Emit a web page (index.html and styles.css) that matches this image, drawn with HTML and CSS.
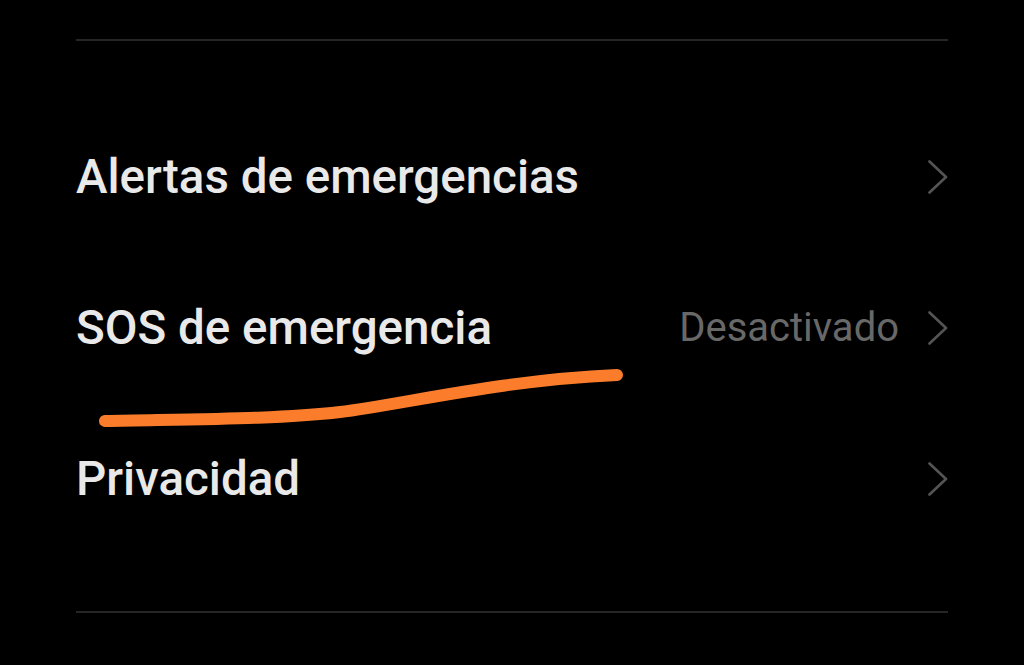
FILE: index.html
```html
<!DOCTYPE html>
<html lang="es">
<head>
<meta charset="utf-8">
<link rel="stylesheet" href="styles.css">
</head>
<body>
<div class="screen">
  <div class="divider top"></div>
  <ul class="list">
    <li class="row">
      <span class="label">Alertas de emergencias</span>
      <span class="right">
        <svg class="chev" viewBox="0 0 20 36"><path d="M1.5 2.5 L18 18 L1.5 33.5"/></svg>
      </span>
    </li>
    <li class="row">
      <span class="label">SOS de emergencia</span>
      <span class="right">
        <span class="value">Desactivado</span>
        <svg class="chev" viewBox="0 0 20 36"><path d="M1.5 2.5 L18 18 L1.5 33.5"/></svg>
      </span>
    </li>
    <li class="row">
      <span class="label">Privacidad</span>
      <span class="right">
        <svg class="chev" viewBox="0 0 20 36"><path d="M1.5 2.5 L18 18 L1.5 33.5"/></svg>
      </span>
    </li>
  </ul>
  <div class="divider bottom"></div>
  <svg class="scribble" viewBox="0 0 1024 665" width="1024" height="665">
    <path d="M105 421 C 200 419, 280 419, 340 412 S 500 380, 617 375"/>
  </svg>
</div>
</body>
</html>
```
FILE: styles.css
```css
html, body {
  margin: 0;
  padding: 0;
  background: #000;
}
.screen {
  position: relative;
  width: 1024px;
  height: 665px;
  overflow: hidden;
  background: #000;
  font-family: Roboto, "Liberation Sans", sans-serif;
}
.divider {
  margin-left: 76px;
  width: 872px;
  height: 2px;
  background: #262626;
}
.divider.top {
  margin-top: 39px;
}
.list {
  list-style: none;
  margin: 0;
  padding: 60px 0 57px 0;
}
.row {
  height: 151px;
  display: flex;
  align-items: center;
  justify-content: space-between;
  margin-left: 76px;
  width: 872px;
}
.label {
  color: #e9e9e9;
  font-size: 47.5px;
  font-weight: 500;
}
.right {
  display: flex;
  align-items: center;
  gap: 29px;
}
.value {
  color: #686868;
  font-size: 40px;
  font-weight: 400;
}
.chev {
  width: 20px;
  height: 36px;
  display: block;
}
.chev path {
  fill: none;
  stroke: #545454;
  stroke-width: 2.6;
  stroke-linecap: round;
  stroke-linejoin: round;
}
.scribble {
  position: absolute;
  left: 0;
  top: 0;
  pointer-events: none;
}
.scribble path {
  fill: none;
  stroke: #fb7d2c;
  stroke-width: 12;
  stroke-linecap: round;
}
```
